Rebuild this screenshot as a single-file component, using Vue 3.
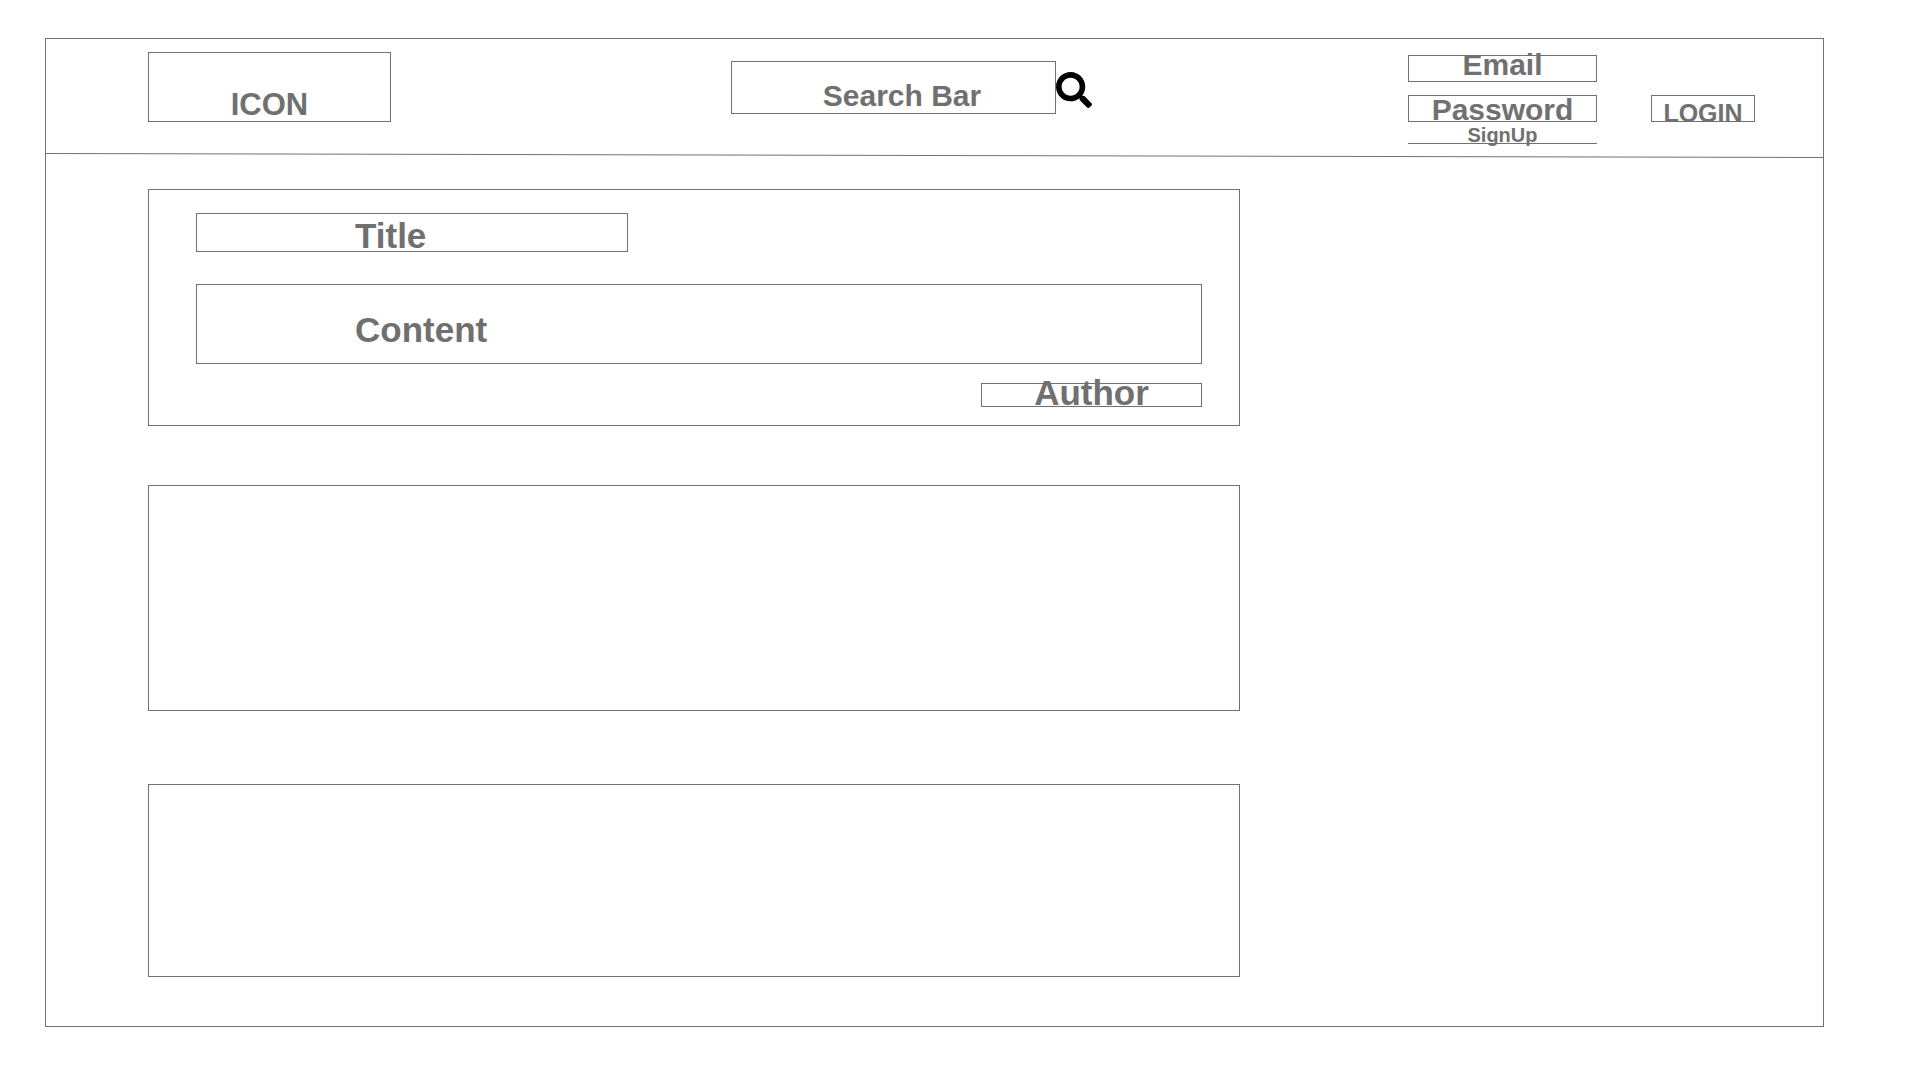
<script setup>
const emptyPosts = [
  { id: 2, size: 'medium' },
  { id: 3, size: 'small' },
]
</script>

<template>
  <div class="frame">
    <header class="header">
      <a class="logo" href="#">ICON</a>

      <form class="search" role="search" @submit.prevent>
        <input class="search-input" type="search" placeholder="Search Bar" aria-label="Search Bar" />
        <button class="search-button" type="submit" aria-label="Search">
          <svg viewBox="0 0 512 512" width="36" height="36" aria-hidden="true">
            <path
              d="M505 442.7L405.3 343c-4.5-4.5-10.6-7-17-7H372c27.6-35.3 44-79.7 44-128C416 93.1 322.9 0 208 0S0 93.1 0 208s93.1 208 208 208c48.3 0 92.7-16.4 128-44v16.3c0 6.4 2.5 12.5 7 17l99.7 99.7c9.4 9.4 24.6 9.4 33.9 0l28.3-28.3c9.4-9.4 9.4-24.6.1-34zM208 336c-70.7 0-128-57.2-128-128 0-70.7 57.2-128 128-128 70.7 0 128 57.2 128 128 0 70.7-57.2 128-128 128z"
            />
          </svg>
        </button>
      </form>

      <form class="account" @submit.prevent>
        <div class="field email">
          <input type="email" placeholder="Email" aria-label="Email" />
        </div>
        <div class="field password">
          <input type="password" placeholder="Password" aria-label="Password" />
        </div>
        <button class="login" type="submit">LOGIN</button>
        <a class="signup" href="#">SignUp</a>
      </form>
    </header>

    <svg class="divider" viewBox="0 0 1778 5" preserveAspectRatio="none" aria-hidden="true">
      <line x1="0" y1="0.5" x2="1778" y2="4.5" />
    </svg>

    <main class="posts">
      <article class="post">
        <h2 class="title">Title</h2>
        <p class="content">Content</p>
        <p class="author">Author</p>
      </article>
      <article v-for="post in emptyPosts" :key="post.id" class="post" :class="post.size"></article>
    </main>
  </div>
</template>

<style>
body {
  background: #fff;
}
</style>

<style scoped>
.frame,
.frame * {
  box-sizing: border-box;
}

.frame {
  margin: 38px 96px 53px 45px;
  border: 1px solid #707070;
  color: #707070;
  font-family: "Liberation Sans", Arial, sans-serif;
  font-weight: 700;
}

a {
  color: inherit;
  text-decoration: none;
}

input,
button {
  margin: 0;
  padding: 0;
  border: 0;
  border-radius: 0;
  background: transparent;
  color: inherit;
  font: inherit;
  appearance: none;
}

input::placeholder {
  color: #707070;
  opacity: 1;
}

.header {
  display: grid;
  grid-template-columns: 243px 340fr 361px 316fr 347px;
  align-items: start;
  height: 114px;
  padding: 0 68px 0 102px;
  font-size: 30px;
}

.logo {
  display: flex;
  align-items: flex-end;
  justify-content: center;
  height: 70px;
  margin-top: 13px;
  border: 1px solid #707070;
  font-size: 31px;
  line-height: 32px;
}

.search {
  display: flex;
  grid-column: 3;
  margin-top: 22px;
}

.search-input {
  width: 325px;
  height: 53px;
  padding: 16px 0 0 42px;
  border: 1px solid #707070;
  text-align: center;
}

.search-button {
  width: 36px;
  height: 36px;
  margin-top: 11px;
  color: #000;
}

.search-button svg {
  display: block;
  fill: currentColor;
}

.account {
  display: grid;
  grid-column: 5;
  grid-template-columns: 189px 104px;
  grid-template-rows: 40px 27px 22px;
  justify-content: space-between;
  align-items: start;
  margin-top: 16px;
}

.field {
  display: flex;
  align-items: center;
  height: 27px;
  border: 1px solid #707070;
}

.field input {
  flex: none;
  width: 100%;
  height: 44px;
  text-align: center;
}

.email input {
  padding-bottom: 8px;
}

.password {
  grid-row: 2;
}

.password input {
  padding-top: 2px;
}

.login {
  grid-row: 2;
  height: 27px;
  padding-top: 4px;
  border: 1px solid #707070;
  font-size: 25px;
  line-height: 26px;
}

.signup {
  grid-row: 3;
  height: 22px;
  border-bottom: 1px solid #707070;
  font-size: 20px;
  line-height: 26px;
  text-align: center;
}

.divider {
  display: block;
  width: 100%;
  height: 5px;
  overflow: visible;
}

.divider line {
  stroke: #707070;
  stroke-width: 1;
  vector-effect: non-scaling-stroke;
}

.posts {
  display: grid;
  grid-template-columns: 1092fr 583fr;
  padding: 31px 0 49px 102px;
}

.post {
  display: flex;
  flex-direction: column;
  grid-column: 1;
  padding: 23px 37px 18px 47px;
  border: 1px solid #707070;
}

.medium {
  height: 226px;
  margin-top: 59px;
}

.small {
  height: 193px;
  margin-top: 73px;
}

.title,
.content,
.author {
  margin: 0;
  border: 1px solid #707070;
  font-size: 35px;
  font-weight: 700;
}

.title {
  width: 432px;
  height: 39px;
  padding-left: 158px;
  line-height: 44px;
}

.content {
  height: 80px;
  margin-top: 32px;
  padding-left: 158px;
  line-height: 90px;
}

.author {
  align-self: flex-end;
  width: 221px;
  height: 24px;
  margin-top: 19px;
  line-height: 18px;
  text-align: center;
}
</style>
